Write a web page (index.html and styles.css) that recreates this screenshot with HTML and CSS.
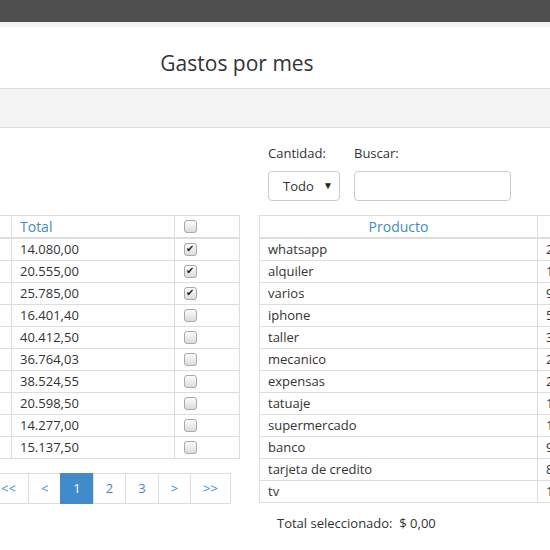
FILE: index.html
```html
<!DOCTYPE html>
<html lang="es">
<head>
<meta charset="utf-8">
<title>Gastos por mes</title>
<link rel="stylesheet" href="styles.css">
</head>
<body>
<div class="topbar"></div>
<div class="strip"></div>
<div class="title-area"><h1 class="title">Gastos por mes</h1></div>
<div class="band"></div>

<div class="main">
  <div class="filters">
    <div class="field">
      <label class="lbl">Cantidad:</label>
      <div class="select"><span>Todo</span><span class="arrow">&#9660;</span></div>
    </div>
    <div class="field">
      <label class="lbl">Buscar:</label>
      <div class="input"></div>
    </div>
  </div>

  <div class="col-left">
    <table class="tbl left">
      <colgroup><col class="c-mes"><col class="c-total"><col class="c-chk"></colgroup>
      <thead>
        <tr><th></th><th>Total</th><th><input type="checkbox" class="chk"></th></tr>
      </thead>
      <tbody>
        <tr><td></td><td>14.080,00</td><td><input type="checkbox" class="chk" checked></td></tr>
        <tr><td></td><td>20.555,00</td><td><input type="checkbox" class="chk" checked></td></tr>
        <tr><td></td><td>25.785,00</td><td><input type="checkbox" class="chk" checked></td></tr>
        <tr><td></td><td>16.401,40</td><td><input type="checkbox" class="chk"></td></tr>
        <tr><td></td><td>40.412,50</td><td><input type="checkbox" class="chk"></td></tr>
        <tr><td></td><td>36.764,03</td><td><input type="checkbox" class="chk"></td></tr>
        <tr><td></td><td>38.524,55</td><td><input type="checkbox" class="chk"></td></tr>
        <tr><td></td><td>20.598,50</td><td><input type="checkbox" class="chk"></td></tr>
        <tr><td></td><td>14.277,00</td><td><input type="checkbox" class="chk"></td></tr>
        <tr><td></td><td>15.137,50</td><td><input type="checkbox" class="chk"></td></tr>
      </tbody>
    </table>
    <ul class="pager">
      <li>&lt;&lt;</li>
      <li>&lt;</li>
      <li class="active">1</li>
      <li>2</li>
      <li>3</li>
      <li>&gt;</li>
      <li>&gt;&gt;</li>
    </ul>
  </div>

  <div class="col-right">
    <table class="tbl right">
      <colgroup><col class="c-prod"><col class="c-val"></colgroup>
      <thead>
        <tr><th class="center">Producto</th><th class="center"></th></tr>
      </thead>
      <tbody>
        <tr><td>whatsapp</td><td>2</td></tr>
        <tr><td>alquiler</td><td>1</td></tr>
        <tr><td>varios</td><td>9</td></tr>
        <tr><td>iphone</td><td>5</td></tr>
        <tr><td>taller</td><td>3</td></tr>
        <tr><td>mecanico</td><td>2</td></tr>
        <tr><td>expensas</td><td>2</td></tr>
        <tr><td>tatuaje</td><td>1</td></tr>
        <tr><td>supermercado</td><td>1</td></tr>
        <tr><td>banco</td><td>9</td></tr>
        <tr><td>tarjeta de credito</td><td>8</td></tr>
        <tr><td>tv</td><td>1</td></tr>
      </tbody>
    </table>
    <p class="sum">Total seleccionado:&nbsp; $ 0,00</p>
  </div>
</div>
</body>
</html>
```

FILE: styles.css
```css
html, body {
  margin: 0;
  padding: 0;
  background: #fff;
  overflow: hidden;
}
body {
  font-family: "Open Sans", "Liberation Sans", sans-serif;
  font-size: 13px;
  color: #333;
  width: 550px;
  height: 550px;
}
.topbar {
  height: 22px;
  background: #4f4f4f;
}
.strip {
  height: 5px;
  background: #f2f2f2;
}
.title-area {
  height: 61px;
  box-sizing: border-box;
  padding-top: 22px;
  padding-right: 76px;
  text-align: center;
}
.title {
  margin: 0;
  font-size: 21px;
  font-weight: 400;
  line-height: 28px;
  color: #333;
}
.band {
  height: 38px;
  background: #f4f4f4;
  border-top: 1px solid #dedede;
  border-bottom: 1px solid #dedede;
}
.main {
  display: grid;
  grid-template-columns: 337px 378px;
  column-gap: 20px;
  margin-left: -98px;
  width: 735px;
}
.filters {
  grid-column: 2;
  grid-row: 1;
  display: flex;
  gap: 14px;
  padding: 16px 0 14px 9px;
}
.field {
  display: flex;
  flex-direction: column;
}
.lbl {
  line-height: 18px;
  height: 18px;
  margin-bottom: 9px;
}
.select {
  width: 72px;
  height: 30px;
  box-sizing: border-box;
  border: 1px solid #ccc;
  border-radius: 4px;
  display: flex;
  align-items: center;
  justify-content: space-between;
  padding: 0 6px 0 14px;
  font-size: 13px;
  color: #333;
}
.arrow {
  font-size: 10px;
  color: #222;
  margin-top: -3px;
}
.input {
  width: 157px;
  height: 30px;
  box-sizing: border-box;
  border: 1px solid #ccc;
  border-radius: 4px;
}
.col-left {
  grid-column: 1;
  grid-row: 2;
}
.col-right {
  grid-column: 2;
  grid-row: 2;
}
.tbl {
  border-collapse: collapse;
  table-layout: fixed;
  border: 1px solid #ddd;
}
.tbl.left { width: 337px; }
.tbl.right { width: 378px; }
.c-mes { width: 109px; }
.c-total { width: 163px; }
.c-chk { width: 65px; }
.c-prod { width: 278px; }
.c-val { width: 100px; }
.tbl th {
  font-weight: 400;
  font-size: 14px;
  color: #428bca;
  text-align: left;
  padding: 0 8px;
  height: 21px;
  line-height: 19px;
  border: 1px solid #ddd;
  border-bottom: 2px solid #ddd;
  white-space: nowrap;
  overflow: hidden;
}
.tbl th.center {
  text-align: center;
}
.tbl td {
  padding: 0 8px;
  height: 21px;
  line-height: 17px;
  border: 1px solid #ddd;
  white-space: nowrap;
  overflow: hidden;
  color: #333;
}
.chk {
  appearance: none;
  -webkit-appearance: none;
  display: block;
  width: 13px;
  height: 13px;
  margin: 0 0 0 1px;
  box-sizing: border-box;
  border: 1px solid #a9a9a9;
  border-radius: 3px;
  background: linear-gradient(#fbfbfb, #dcdcdc);
  position: relative;
}
.chk:checked::after {
  content: "\2714";
  position: absolute;
  left: 1px;
  top: -3px;
  font-size: 10px;
  line-height: 16px;
  color: #222;
  font-family: "DejaVu Sans", sans-serif;
}
.pager {
  list-style: none;
  display: flex;
  margin: 14px 0 0 86px;
  padding: 0;
}
.pager li {
  border: 1px solid #ddd;
  padding: 6px 12px;
  line-height: 17px;
  color: #428bca;
  margin-left: -1px;
  background: #fff;
}
.pager li:first-child {
  margin-left: 0;
}
.pager li.active {
  background: #428bca;
  border-color: #428bca;
  color: #fff;
}
.sum {
  margin: 11px 0 0 18px;
  line-height: 18px;
}
```
